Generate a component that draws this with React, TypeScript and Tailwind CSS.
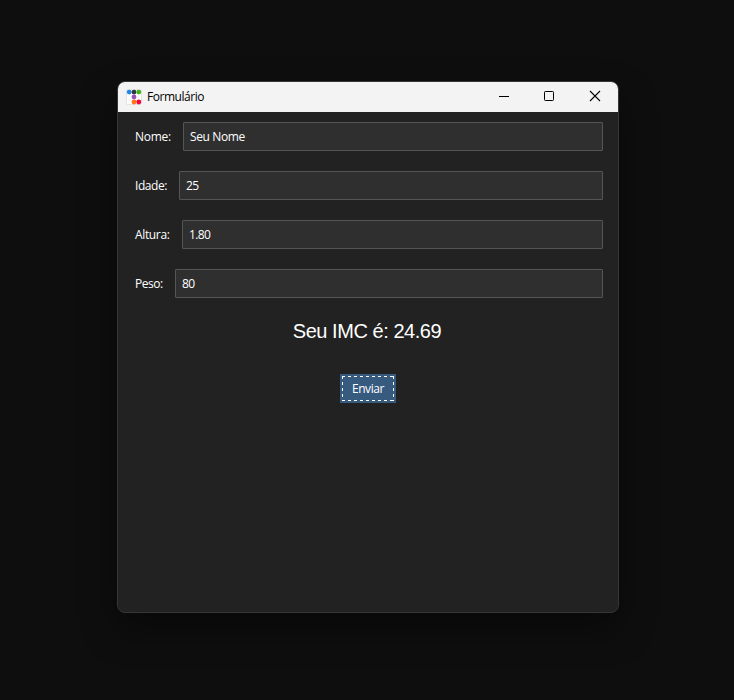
import React from "react";

type Field = { label: string; value: string; labelWidth: string; spacing: string; valueSpacing: string };

const fields: Field[] = [
  { label: "Nome:", value: "Seu Nome", labelWidth: "w-12", spacing: "tracking-[-0.25px]", valueSpacing: "tracking-[-0.37px]" },
  { label: "Idade:", value: "25", labelWidth: "w-11", spacing: "tracking-[-0.45px]", valueSpacing: "tracking-[-0.5px]" },
  { label: "Altura:", value: "1.80", labelWidth: "w-[47px]", spacing: "tracking-[-0.35px]", valueSpacing: "tracking-[-0.65px]" },
  { label: "Peso:", value: "80", labelWidth: "w-10", spacing: "tracking-[-0.5px]", valueSpacing: "tracking-[-0.5px]" },
];

function AppIcon() {
  return (
    <svg width="16" height="16" viewBox="0 0 16 16">
      <rect x="0.5" y="0.5" width="15" height="15" rx="1" fill="#fff" stroke="#e2e2e2" />
      <circle cx="3.2" cy="3.1" r="2.45" fill="#1e88e5" />
      <circle cx="8" cy="3.1" r="2.45" fill="#333840" />
      <circle cx="12.8" cy="3.1" r="2.45" fill="#3fb618" />
      <circle cx="8" cy="8" r="2.4" fill="#9954bb" />
      <circle cx="8" cy="13" r="2.45" fill="#ff7518" />
      <circle cx="12.8" cy="13" r="2.45" fill="#ff0039" />
    </svg>
  );
}

function TitleBar() {
  return (
    <div className="flex h-[30px] items-center bg-[#f3f3f3] pl-2 text-black">
      <AppIcon />
      <span className="ml-[5px] flex-1 text-[12px] leading-4 tracking-[-0.47px]">Formulário</span>
      <svg width="124" height="30" viewBox="0 0 124 30" fill="none" stroke="#000">
        <path d="M5 14.5h10" />
        <rect x="50.5" y="9.5" width="9" height="9" rx="0.8" />
        <path d="M96 9l10 10M106 9l-10 10" strokeWidth="1.1" />
      </svg>
    </div>
  );
}

export default function App() {
  return (
    <div className="flex h-[700px] w-[734px] items-start justify-center bg-[#0e0e0e] pt-[81px] pl-[2px] font-['Open_Sans','Noto_Sans',sans-serif]">
      <div className="h-[532px] w-[502px] overflow-hidden rounded-lg border border-[#363636] bg-[#222222] shadow-[0_16px_36px_rgba(0,0,0,0.4)]">
        <TitleBar />
        <div className="flex flex-col gap-5 pt-2.5 pr-[15px] pl-[17px]">
          {fields.map((f) => (
            <div key={f.label} className="flex h-[29px] items-center text-[12px] leading-4 text-white">
              <span className={`${f.labelWidth} ${f.spacing} shrink-0 whitespace-nowrap`}>{f.label}</span>
              <div className={`flex h-[29px] flex-1 items-center rounded-[1px] border border-[#555555] bg-[#2f2f2f] pl-1.5 ${f.valueSpacing}`}>
                {f.value}
              </div>
            </div>
          ))}
        </div>
        <div className="mt-5 flex flex-col items-center">
          <div className="h-[29px] pr-0.5 font-['Liberation_Sans',Arial,sans-serif] text-[20px] leading-[27px] tracking-[-0.45px] text-white">Seu IMC é: 24.69</div>
          <button className="relative mt-[27px] flex h-[29px] w-14 items-center justify-center bg-[#375a7f] text-[12px] leading-4 tracking-[-0.4px] text-white">
            <svg className="absolute inset-0" width="56" height="29" fill="none" stroke="#fff" shapeRendering="crispEdges">
              <path d="M2 2.5H54M2 26.5H54" strokeDasharray="3 3" />
              <path d="M2.5 2V27M53.5 2V27" strokeDasharray="3 3" />
            </svg>
            Enviar
          </button>
        </div>
      </div>
    </div>
  );
}
